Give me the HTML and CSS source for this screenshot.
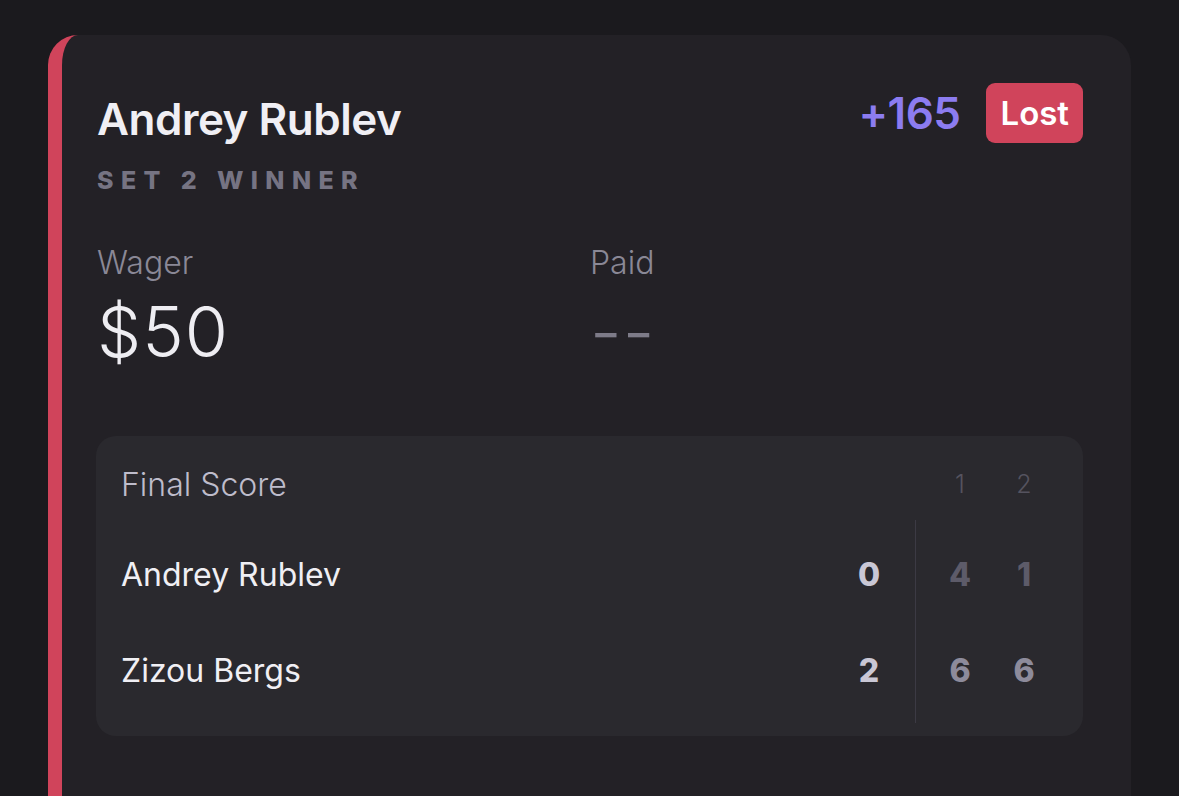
FILE: index.html
```html
<!DOCTYPE html>
<html>
<head>
<meta charset="utf-8">
<link rel="stylesheet" href="styles.css">
</head>
<body>
<div class="card">
  <div class="head">
    <div class="head-left">
      <div class="title">Andrey Rublev</div>
      <div class="market">SET 2 WINNER</div>
    </div>
    <div class="head-right">
      <span class="odds">+165</span>
      <span class="badge">Lost</span>
    </div>
  </div>
  <div class="amounts">
    <div class="amount">
      <div class="label">Wager</div>
      <div class="value">$50</div>
    </div>
    <div class="amount">
      <div class="label">Paid</div>
      <div class="value muted">--</div>
    </div>
  </div>
  <div class="score">
    <div class="score-grid">
      <div class="score-title">Final Score</div>
      <div class="set-h c-s1">1</div>
      <div class="set-h c-s2">2</div>

      <div class="name row1">Andrey Rublev</div>
      <div class="total row1">0</div>
      <div class="divider"></div>
      <div class="set lose row1 c-s1">4</div>
      <div class="set lose row1 c-s2">1</div>

      <div class="name row2">Zizou Bergs</div>
      <div class="total row2">2</div>
      <div class="set win row2 c-s1">6</div>
      <div class="set win row2 c-s2">6</div>
    </div>
  </div>
</div>
</body>
</html>
```
FILE: styles.css
```css
html, body {
  margin: 0;
  padding: 0;
  background: #1b1a1e;
  height: 796px;
  overflow: hidden;
}
body {
  padding: 35px 0 0 48px;
  font-family: Inter, "Noto Sans", sans-serif;
  color: #eeedf2;
}
.card {
  width: 986px;
  min-height: 900px;
  background: #232126;
  border-left: 14px solid #d0445b;
  border-radius: 30px;
  padding: 48px 48px 0 35px;
  box-sizing: content-box;
}
.head {
  display: flex;
  justify-content: space-between;
  align-items: flex-start;
}
.title {
  margin-top: 6px;
  font-size: 44px;
  font-weight: 600;
  letter-spacing: -0.5px;
  line-height: 60px;
  color: #f0eff4;
}
.market {
  margin-top: 17px;
  font-size: 25px;
  font-weight: 800;
  letter-spacing: 7.4px;
  color: #767483;
  line-height: 28px;
}
.head-right {
  display: flex;
  align-items: center;
  gap: 26px;
  height: 60px;
}
.odds {
  font-size: 44px;
  font-weight: 600;
  color: #8c7cf0;
  letter-spacing: -0.5px;
}
.badge {
  background: #d0445b;
  color: #fff;
  font-size: 33px;
  font-weight: 600;
  border-radius: 9px;
  padding: 0 14px;
  height: 60px;
  line-height: 60px;
}
.amounts {
  display: grid;
  grid-template-columns: 1fr 1fr;
  margin-top: 49px;
}
.label {
  font-size: 32px;
  font-weight: 300;
  color: #8a8896;
  line-height: 40px;
}
.value {
  margin-top: 9px;
  font-size: 70px;
  font-weight: 300;
  line-height: 80px;
  color: #eeedf2;
  letter-spacing: 1px;
}
.value.muted {
  color: #7d7b88;
}
.score {
  margin-top: 64px;
  margin-left: -1px;
  background: #2a292e;
  border-radius: 20px;
  padding: 30px 27px 18px 25px;
}
.score-grid {
  display: grid;
  grid-template-columns: 1fr 40px 26px 1px 12px 64px 64px;
  grid-template-rows: 36px 96px 96px;
  row-gap: 0;
  align-items: center;
}
.score-title {
  grid-column: 1 / 6;
  grid-row: 1;
  margin-bottom: 0;
  font-size: 32px;
  font-weight: 300;
  color: #bebccb;
}
.set-h {
  grid-row: 1;
  text-align: center;
  font-size: 25px;
  font-weight: 300;
  color: #55535f;
}
.c-s1 { grid-column: 6; }
.c-s2 { grid-column: 7; }
.row1 { grid-row: 2; margin-top: 24px; }
.row2 { grid-row: 3; margin-top: 24px; }
.score-grid { grid-template-rows: 36px 120px 96px; }
.row2 { margin-top: 0; }
.name {
  grid-column: 1;
  font-size: 32px;
  font-weight: 400;
  color: #f0eff4;
}
.total {
  grid-column: 2;
  text-align: center;
  font-size: 32px;
  font-weight: 800;
  color: #c9c7d5;
}
.divider {
  grid-column: 4;
  grid-row: 2 / 4;
  align-self: stretch;
  margin: 18px 0 -5px;
  background: #3c3a44;
}
.set {
  text-align: center;
  font-size: 32px;
  font-weight: 800;
}
.set.lose { color: #5d5b69; }
.set.win { color: #8d8b9b; }
```
